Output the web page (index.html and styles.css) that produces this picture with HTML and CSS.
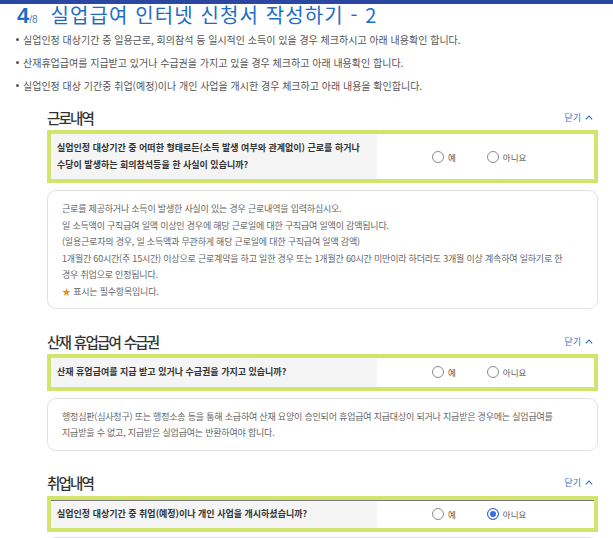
FILE: index.html
```html
<!DOCTYPE html>
<html lang="ko">
<head>
<meta charset="utf-8">
<title>실업급여 인터넷 신청서 작성하기 - 2</title>
<link rel="stylesheet" href="styles.css">
</head>
<body>
<div class="topbar"></div>

<h1 class="title">
  <span class="step"><b>4</b><small>/8</small></span>
  <span class="title-text">실업급여 인터넷 신청서 작성하기 - 2</span>
</h1>

<ul class="notes">
  <li>실업인정 대상기간 중 일용근로, 회의참석 등 일시적인 소득이 있을 경우 체크하시고 아래 내용확인 합니다.</li>
  <li>산재휴업급여를 지급받고 있거나 수급권을 가지고 있을 경우 체크하고 아래 내용확인 합니다.</li>
  <li>실업인정 대상 기간중 취업(예정)이나 개인 사업을 개시한 경우 체크하고 아래 내용을 확인합니다.</li>
</ul>

<section class="block">
  <div class="block-head">
    <h2>근로내역</h2>
    <button class="toggle" type="button">닫기
      <svg width="8" height="5" viewBox="0 0 8 5"><polyline points="0.8,4.4 4,1.2 7.2,4.4" fill="none" stroke="#3b6fc7" stroke-width="1.2"/></svg>
    </button>
  </div>
  <div class="question">
    <p class="q-text">실업인정 대상기간 중 어떠한 형태로든(소득 발생 여부와 관계없이) 근로를 하거나<br>수당이 발생하는 회의참석등을 한 사실이 있습니까?</p>
    <div class="q-opts">
      <label class="opt"><span class="radio"></span>예</label>
      <label class="opt"><span class="radio"></span>아니요</label>
    </div>
  </div>
  <div class="info">
    <p>근로를 제공하거나 소득이 발생한 사실이 있는 경우 근로내역을 입력하십시오.</p>
    <p>일 소득액이 구직급여 일액 이상인 경우에 해당 근로일에 대한 구직급여 일액이 감액됩니다.<br>(일용근로자의 경우, 일 소득액과 무관하게 해당 근로일에 대한 구직급여 일액 감액)</p>
    <p>1개월간 60시간(주 15시간) 이상으로 근로계약을 하고 일한 경우 또는 1개월간 60시간 미만이라 하더라도 3개월 이상 계속하여 일하기로 한<br>경우 취업으로 인정됩니다.</p>
    <p><span class="star">★</span> 표시는 필수항목입니다.</p>
  </div>
</section>

<section class="block">
  <div class="block-head">
    <h2>산재 휴업급여 수급권</h2>
    <button class="toggle" type="button">닫기
      <svg width="8" height="5" viewBox="0 0 8 5"><polyline points="0.8,4.4 4,1.2 7.2,4.4" fill="none" stroke="#3b6fc7" stroke-width="1.2"/></svg>
    </button>
  </div>
  <div class="question">
    <p class="q-text">산재 휴업급여를 지급 받고 있거나 수급권을 가지고 있습니까?</p>
    <div class="q-opts">
      <label class="opt"><span class="radio"></span>예</label>
      <label class="opt"><span class="radio"></span>아니요</label>
    </div>
  </div>
  <div class="info">
    <p>행정심판(심사청구) 또는 행정소송 등을 통해 소급하여 산재 요양이 승인되어 휴업급여 지급대상이 되거나 지급받은 경우에는 실업급여를<br>지급받을 수 없고, 지급받은 실업급여는 반환하여야 합니다.</p>
  </div>
</section>

<section class="block">
  <div class="block-head">
    <h2>취업내역</h2>
    <button class="toggle" type="button">닫기
      <svg width="8" height="5" viewBox="0 0 8 5"><polyline points="0.8,4.4 4,1.2 7.2,4.4" fill="none" stroke="#3b6fc7" stroke-width="1.2"/></svg>
    </button>
  </div>
  <div class="question ruled">
    <p class="q-text">실업인정 대상기간 중 취업(예정)이나 개인 사업을 개시하셨습니까?</p>
    <div class="q-opts">
      <label class="opt"><span class="radio"></span>예</label>
      <label class="opt"><span class="radio on"></span>아니요</label>
    </div>
  </div>
  <div class="info info-next">
    <p>&nbsp;</p>
  </div>
</section>
</body>
</html>
```

FILE: styles.css
```css
* { box-sizing: border-box; }

html, body {
  margin: 0;
  overflow: hidden;
}

body {
  font-family: "Noto Sans CJK KR", "Noto Sans", sans-serif;
  color: #333;
  background: #fff;
}

/* thin navy strip across the top */
.topbar {
  height: 4px;
  background: #2b47a1;
}

/* step counter + page title */
.title {
  margin: 0;
  height: 24px;
  display: flex;
  align-items: baseline;
  padding-left: 17px;
  color: #1f6cc6;
  font-size: 20px;
  font-weight: 400;
  line-height: 22px;
}

.step b {
  font-family: "Liberation Sans", sans-serif;
  font-size: 22px;
  font-weight: 700;
}

.step small {
  font-family: "Liberation Sans", sans-serif;
  font-size: 10px;
  color: #4a7fcc;
}

.title-text {
  margin-left: 13px;
  letter-spacing: 1.1px;
}

/* guidance bullets */
.notes {
  list-style: none;
  margin: 0;
  padding: 0 0 0 16px;
  font-size: 10px;
  letter-spacing: 0;
  color: #555;
}

.notes li {
  line-height: 23px;
  display: flex;
  align-items: center;
}

.notes li::before {
  content: "";
  flex: none;
  width: 3px;
  height: 3px;
  border-radius: 50%;
  background: #555;
  margin-right: 4px;
}

/* collapsible form blocks */
.block {
  margin: 10px 15px 0 47px;
}

.block + .block {
  margin-top: 22px;
}

.block-head {
  display: flex;
  justify-content: space-between;
  align-items: center;
  height: 20px;
  margin-bottom: 3px;
}

.block-head h2 {
  margin: 0;
  font-size: 14.5px;
  font-weight: 500;
  letter-spacing: -1.8px;
  word-spacing: 1.5px;
  color: #333;
}

.toggle {
  border: 0;
  background: none;
  padding: 0 5px 0 0;
  font-family: inherit;
  font-size: 9px;
  color: #3b6fc7;
  display: flex;
  align-items: center;
  gap: 4px;
  cursor: pointer;
}

/* highlighted yes/no question row */
.question {
  display: grid;
  grid-template-columns: 326px 1fr;
  border: 4px solid #d2e46c;
}

.q-text {
  margin: 0;
  background: #f5f5f5;
  padding: 6px 6px;
  font-size: 9px;
  font-weight: 700;
  letter-spacing: 0;
  line-height: 16.5px;
  color: #333;
}

.question.ruled > * {
  box-shadow: inset 0 1px 0 #7a7a7a;
}

.q-opts {
  display: flex;
  align-items: center;
  gap: 31px;
  padding-left: 55px;
  font-size: 8.5px;
  color: #555;
  background: #fff;
}

.opt {
  display: flex;
  align-items: center;
  gap: 4px;
}

.radio {
  flex: none;
  width: 12px;
  height: 12px;
  border: 1px solid #8a8a8a;
  border-radius: 50%;
  background: #fff;
}

.radio.on {
  border-color: #3a6be0;
  background: #3a6be0;
  box-shadow: inset 0 0 0 2px #fff;
}

/* explanatory note boxes */
.info {
  margin-top: 7px;
  border: 1px solid #e2e2e2;
  border-radius: 9px;
  padding: 10px 14px 8px;
  font-size: 9px;
  letter-spacing: -0.2px;
  line-height: 16.5px;
  color: #666;
}

.info p {
  margin: 0;
}

.info-next {
  margin-top: 5px;
  height: 60px;
}

.star {
  color: #f08a24;
}
```
